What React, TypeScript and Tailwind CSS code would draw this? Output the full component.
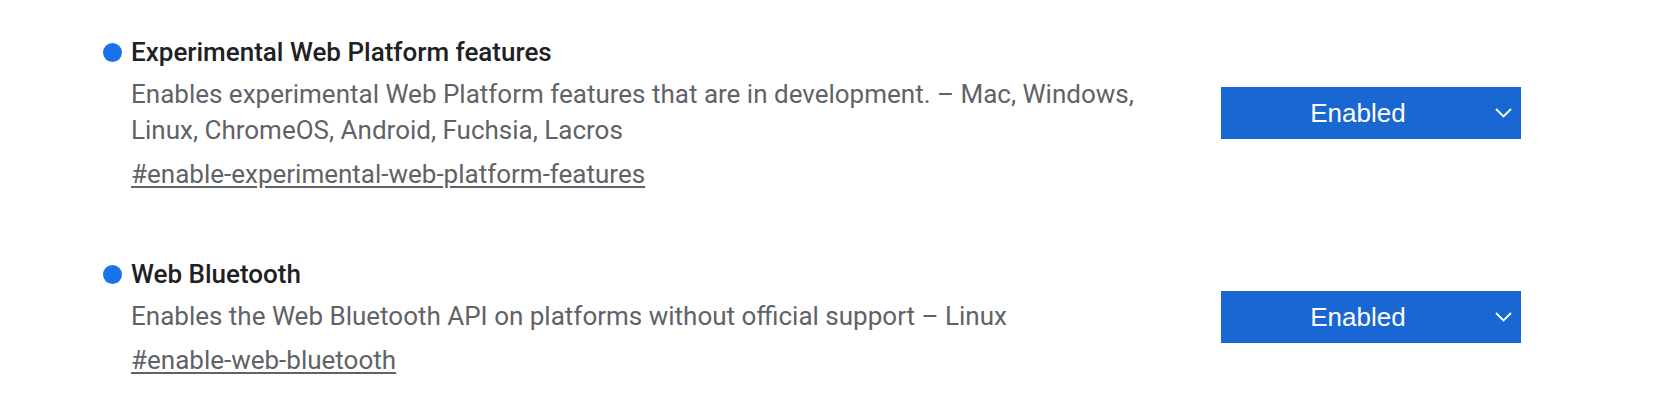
function Chevron() {
  return (
    <svg width="17" height="10" viewBox="0 0 17 10" fill="none" className="mr-[9px] shrink-0">
      <path d="M1 1L8.5 8.5L16 1" stroke="white" strokeWidth="1.8" />
    </svg>
  )
}

type Flag = {
  name: string
  lines: string[]
  tag: string
}

const flags: Flag[] = [
  {
    name: 'Experimental Web Platform features',
    lines: [
      'Enables experimental Web Platform features that are in development. – Mac, Windows,',
      'Linux, ChromeOS, Android, Fuchsia, Lacros',
    ],
    tag: '#enable-experimental-web-platform-features',
  },
  {
    name: 'Web Bluetooth',
    lines: ['Enables the Web Bluetooth API on platforms without official support – Linux'],
    tag: '#enable-web-bluetooth',
  },
]

function FlagRow({ flag }: { flag: Flag }) {
  return (
    <div className="flex items-center">
      <div className="flex-1 min-w-0">
        <div className="flex items-center h-[36px]">
          <span className="w-[19px] h-[19px] rounded-full bg-[#1a73e8] shrink-0" />
          <h3 className="ml-[9px] text-[26px] leading-[36px] font-medium text-[#202124]">{flag.name}</h3>
        </div>
        <div className="pl-[28px] mt-[6px] text-[26px] leading-[36px] text-[#5f6368]">
          {flag.lines.map((l) => (
            <p key={l}>{l}</p>
          ))}
          <a className="block mt-[8px] underline underline-offset-[3px] text-[#5f6368]">{flag.tag}</a>
        </div>
      </div>
      <div className="w-[300px] h-[52px] bg-[#1967d2] flex items-center text-white mr-[136px] shrink-0">
        <span className="flex-1 text-center text-[26px] font-['Liberation_Sans',Arial,sans-serif]">Enabled</span>
        <Chevron />
      </div>
    </div>
  )
}

export default function App() {
  return (
    <div className="w-[1657px] h-[413px] bg-white pl-[103px] pt-[34px] flex flex-col gap-[64px] font-['Roboto',sans-serif]">
      {flags.map((f) => (
        <FlagRow key={f.tag} flag={f} />
      ))}
    </div>
  )
}
